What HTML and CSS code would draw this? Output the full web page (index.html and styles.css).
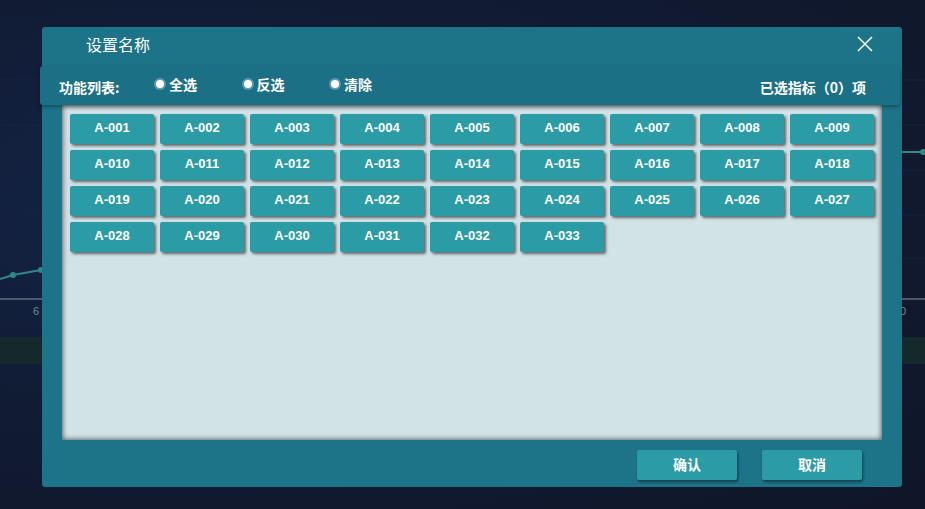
FILE: index.html
```html
<!DOCTYPE html>
<html lang="zh">
<head>
<meta charset="utf-8">
<title>设置名称</title>
<link rel="stylesheet" href="styles.css">
</head>
<body>
<div class="page">
  <svg class="bg-chart" width="925" height="509" viewBox="0 0 925 509">
    <g stroke="#17243f" stroke-width="1">
      <line x1="0" y1="80" x2="925" y2="80"/>
      <line x1="0" y1="125" x2="925" y2="125"/>
      <line x1="0" y1="170" x2="925" y2="170"/>
      <line x1="0" y1="215" x2="925" y2="215"/>
      <line x1="0" y1="258" x2="925" y2="258"/>
    </g>
    <rect x="0" y="337" width="925" height="27" fill="#15282c"/>
    <line x1="0" y1="299" x2="925" y2="299" stroke="#8b95a3" stroke-width="1"/>
    <polyline points="0,279 13,275 41,270 60,266" fill="none" stroke="#2e8a86" stroke-width="2"/>
    <circle cx="13" cy="275" r="3" fill="#2e8a86"/>
    <circle cx="41" cy="270" r="3" fill="#2e8a86"/>
    <polyline points="880,152 925,152" fill="none" stroke="#2e8a86" stroke-width="2"/>
    <circle cx="923" cy="152" r="3" fill="#2e8a86"/>
    <text x="33" y="315" fill="#7c8694" font-size="11" font-family="Liberation Sans, sans-serif">6</text>
    <text x="900" y="315" fill="#7c8694" font-size="11" font-family="Liberation Sans, sans-serif">0</text>
  </svg>

  <div class="modal">
    <div class="modal-header">
      <span class="modal-title">设置名称</span>
      <svg class="close-icon" width="16" height="16" viewBox="0 0 16 16">
        <path d="M1 1 L15 15 M15 1 L1 15" stroke="#ffffff" stroke-width="1.5" fill="none"/>
      </svg>
    </div>

    <div class="toolbar">
      <span class="toolbar-label">功能列表:</span>
      <span class="radio"><span class="dot"></span>全选</span>
      <span class="radio"><span class="dot"></span>反选</span>
      <span class="radio"><span class="dot"></span>清除</span>
      <span class="selected-count">已选指标（0）项</span>
    </div>

    <div class="panel">
      <div class="grid">
        <button class="item">A-001</button>
        <button class="item">A-002</button>
        <button class="item">A-003</button>
        <button class="item">A-004</button>
        <button class="item">A-005</button>
        <button class="item">A-006</button>
        <button class="item">A-007</button>
        <button class="item">A-008</button>
        <button class="item">A-009</button>
        <button class="item">A-010</button>
        <button class="item">A-011</button>
        <button class="item">A-012</button>
        <button class="item">A-013</button>
        <button class="item">A-014</button>
        <button class="item">A-015</button>
        <button class="item">A-016</button>
        <button class="item">A-017</button>
        <button class="item">A-018</button>
        <button class="item">A-019</button>
        <button class="item">A-020</button>
        <button class="item">A-021</button>
        <button class="item">A-022</button>
        <button class="item">A-023</button>
        <button class="item">A-024</button>
        <button class="item">A-025</button>
        <button class="item">A-026</button>
        <button class="item">A-027</button>
        <button class="item">A-028</button>
        <button class="item">A-029</button>
        <button class="item">A-030</button>
        <button class="item">A-031</button>
        <button class="item">A-032</button>
        <button class="item">A-033</button>
      </div>
    </div>

    <div class="footer">
      <button class="action">确认</button>
      <button class="action">取消</button>
    </div>
  </div>
</div>
</body>
</html>
```

FILE: styles.css
```css
html, body {
  margin: 0;
  padding: 0;
}

body {
  width: 925px;
  height: 509px;
  overflow: hidden;
  font-family: "Liberation Sans", "Noto Sans CJK SC", sans-serif;
  background: #101a30;
}

.page {
  position: relative;
  width: 925px;
  height: 509px;
  background: radial-gradient(ellipse at 20% 40%, #142446 0%, #111b33 50%, #0f1628 100%);
}

.bg-chart {
  position: absolute;
  left: 0;
  top: 0;
}

.modal {
  position: absolute;
  left: 42px;
  top: 27px;
  width: 860px;
  height: 460px;
  background: #1d7489;
  border-radius: 3px;
  display: flex;
  flex-direction: column;
}

.modal-header {
  height: 39px;
  display: flex;
  align-items: center;
  justify-content: space-between;
  padding: 0 29px 0 44px;
  box-sizing: border-box;
}

.modal-title {
  color: #ffffff;
  font-size: 16px;
  font-family: "Noto Sans CJK SC", "Liberation Sans", sans-serif;
  margin-top: -5px;
}

.close-icon {
  margin-top: -5px;
}

.toolbar {
  height: 39px;
  margin: 0 2px 0 -2px;
  background: #1b7085;
  border-radius: 3px;
  box-shadow: 0 2px 4px rgba(0, 0, 0, 0.35);
  display: flex;
  align-items: center;
  padding: 0 34px 0 19px;
  color: #ffffff;
  font-size: 14px;
  font-weight: bold;
  font-family: "Noto Sans CJK SC", "Liberation Sans", sans-serif;
  position: relative;
  z-index: 2;
}

.toolbar-label {
  margin-top: 3px;
  width: 97px;
}

.radio {
  display: flex;
  align-items: center;
  margin-top: -4px;
  width: 87.5px;
}

.dot {
  width: 8px;
  height: 8px;
  border-radius: 50%;
  background: #ffffff;
  box-shadow: 0 0 0 2px rgba(190, 220, 228, 0.4);
  margin-right: 5px;
}

.selected-count {
  margin-left: auto;
  margin-top: 2px;
}

.panel {
  height: 335px;
  margin: 0 20px;
  background: #d2e3e7;
  box-shadow: inset 0 0 5px 1px rgba(0, 0, 0, 0.55);
  padding: 9px 8px;
  box-sizing: border-box;
}

.grid {
  display: grid;
  grid-template-columns: repeat(9, 84px);
  grid-auto-rows: 30px;
  gap: 6px;
}

.item {
  border: none;
  margin: 0;
  padding: 0 0 3px;
  background: #2b9ba6;
  color: #ffffff;
  font-family: "Liberation Sans", "Noto Sans CJK SC", sans-serif;
  font-size: 13px;
  font-weight: bold;
  border-radius: 2px;
  box-shadow: 2px 2px 3px rgba(0, 0, 0, 0.55);
}

.footer {
  display: flex;
  justify-content: flex-end;
  gap: 25px;
  padding: 10px 40px 0 0;
}

.action {
  width: 100px;
  height: 30px;
  border: none;
  margin: 0;
  padding: 0 0 2px;
  background: #2b9ba6;
  color: #ffffff;
  font-family: "Noto Sans CJK SC", "Liberation Sans", sans-serif;
  font-size: 14px;
  font-weight: bold;
  border-radius: 2px;
  box-shadow: 1px 2px 3px rgba(0, 0, 0, 0.45);
}
```
